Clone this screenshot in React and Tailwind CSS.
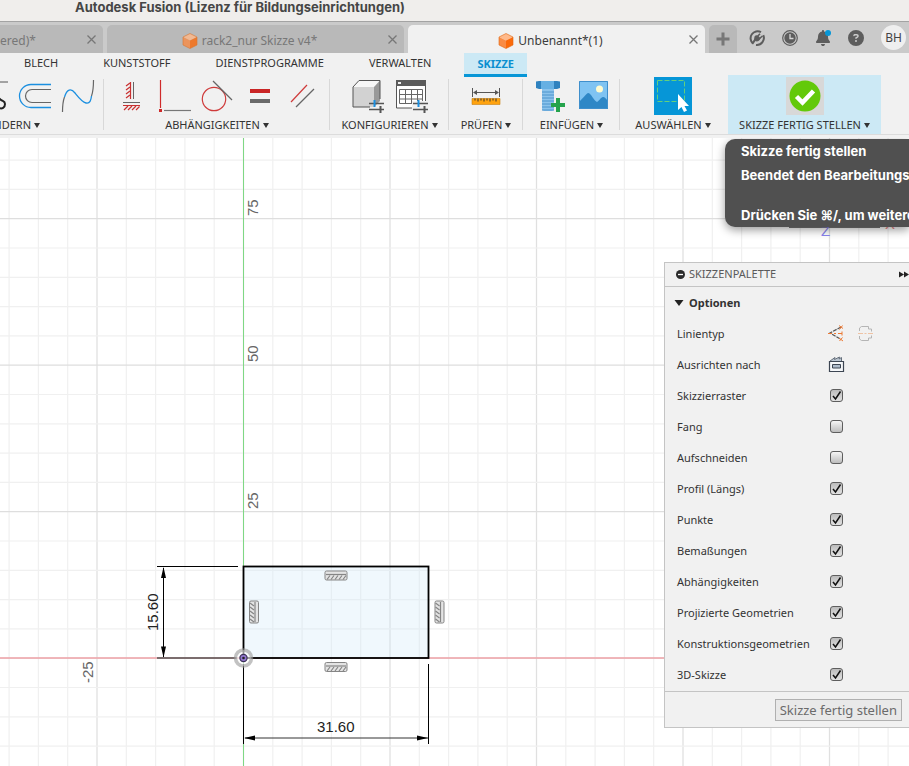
import { FaBell, FaCircleQuestion } from "react-icons/fa6";

const RIBBON_TABS = ["BLECH", "KUNSTSTOFF", "DIENSTPROGRAMME", "VERWALTEN", "SKIZZE"];

const PALETTE_OPTIONS = [
  { label: "Skizzierraster", checked: true },
  { label: "Fang", checked: false },
  { label: "Aufschneiden", checked: false },
  { label: "Profil (Längs)", checked: true },
  { label: "Punkte", checked: true },
  { label: "Bemaßungen", checked: true },
  { label: "Abhängigkeiten", checked: true },
  { label: "Projizierte Geometrien", checked: true },
  { label: "Konstruktionsgeometrien", checked: true },
  { label: "3D-Skizze", checked: true },
];

// sketch origin and grid step in canvas pixels
const ORIGIN = { x: 243.5, y: 520 };
const STEP = 29.3;

function CubeIcon({ muted }) {
  return (
    <svg width="16" height="16" viewBox="0 0 16 16" className={muted ? "opacity-80" : ""}>
      <path d="M8 .5 15 4 8 7.5 1 4z" fill="#ffb98a" />
      <path d="M1 4l7 3.5v8L1 12z" fill="#f98c45" />
      <path d="M15 4 8 7.5v8l7-3.5z" fill="#fb6a0a" />
      <path d="M8 .5 15 4v8l-7 3.5L1 12V4z" fill="none" stroke="#e0650f" strokeWidth=".6" />
    </svg>
  );
}

function CloseButton({ label }) {
  return (
    <button aria-label={label} className="flex h-4 w-4 shrink-0 items-center justify-center">
      <svg width="9" height="9" viewBox="0 0 9 9" stroke="#777" strokeWidth="1.3">
        <path d="M.5.5l8 8M8.5.5l-8 8" />
      </svg>
    </button>
  );
}

function ToolIcon({ label, children }) {
  return (
    <button aria-label={label} className="h-[38px] w-[38px] shrink-0">
      <svg width="38" height="38" viewBox="0 0 38 38" fill="none">
        {children}
      </svg>
    </button>
  );
}

function GroupLabel({ children }) {
  return (
    <button className="flex h-[19px] items-center gap-[3px] whitespace-nowrap pt-[2px] text-[11px]">
      {children}
      <svg width="6" height="5" viewBox="0 0 6 5">
        <path d="M0 0h6L3 5z" fill="#333" />
      </svg>
    </button>
  );
}

function ToolGroup({ label, className, children }) {
  return (
    <div className={`relative flex shrink-0 flex-col items-center pt-[2px] ${className}`}>
      <div className="flex gap-[5px]">{children}</div>
      <GroupLabel>{label}</GroupLabel>
      <span className="absolute right-0 top-1 h-[51px] w-px bg-[#d8d8d8]" />
    </div>
  );
}

function TitleAndTabs() {
  return (
    <header className="shrink-0">
      <div className="h-[22px] overflow-hidden border-b border-[#a3a3a3] bg-[#f0eeec] pl-[75px] font-['Inter','Liberation_Sans',sans-serif] text-[13px] font-bold leading-[14px] text-[#464646]">
        Autodesk Fusion (Lizenz für Bildungseinrichtungen)
      </div>
      <div className="flex h-[31px] items-end gap-1 overflow-hidden bg-[#cacaca] text-[12px] text-[#777]">
        <div className="flex h-7 w-[103px] shrink-0 items-center justify-between rounded-tr-[5px] bg-[#b9b9b9] pr-1">
          <span className="pt-[3px]">ered)*</span>
          <CloseButton label="Tab schließen" />
        </div>
        <div className="flex h-7 w-[297px] shrink-0 items-center rounded-t-[5px] bg-[#b9b9b9] pl-2 pr-1">
          <span className="flex flex-1 items-center justify-center gap-1 pt-[3px]">
            <CubeIcon muted />
            rack2_nur Skizze v4*
          </span>
          <CloseButton label="Tab schließen" />
        </div>
        <div className="flex h-7 w-[297px] shrink-0 items-center rounded-t-[5px] bg-[#f1f1f1] pl-2 pr-1 text-[#3c3c3c]">
          <span className="flex flex-1 items-center justify-center gap-1 pt-[3px]">
            <CubeIcon />
            Unbenannt*(1)
          </span>
          <CloseButton label="Tab schließen" />
        </div>
        <button
          aria-label="Neuer Tab"
          className="flex h-7 w-7 shrink-0 items-center justify-center rounded-t-[5px] bg-[#b9b9b9]"
        >
          <svg width="14" height="14" viewBox="0 0 14 14" stroke="#777" strokeWidth="3">
            <path d="M7 .5v13M.5 7h13" />
          </svg>
        </button>
        <div className="ml-2 flex h-[31px] items-center gap-[17px] text-[#5d5d5d]">
          <button aria-label="Erweiterungen">
            <svg width="16" height="16" viewBox="0 0 16 16" fill="none" stroke="#5d5d5d">
              <path d="M4 13.600A7 7 0 0 1 12 2.200" strokeWidth="2" />
              <path d="M14.300 5.200A7 7 0 0 1 7 14.900" strokeWidth="2" />
              <path d="M5.500 6.500C7 4.500 9 4.500 11.500 8.500 10.500 11 8 12 6.500 11L4 14.500 2.500 13 5 9.500z" fill="#5d5d5d" stroke="none" />
              <path d="M8 7l3-3.200M10 9l3.500-3" strokeWidth="1.600" />
            </svg>
          </button>
          <button aria-label="Auftragsstatus">
            <svg width="16" height="16" viewBox="0 0 16 16" fill="none">
              <circle cx="8" cy="8" r="7.300" stroke="#5d5d5d" strokeWidth="1.200" />
              <circle cx="8" cy="8" r="5.700" fill="#5d5d5d" />
              <path d="M8 4v4.500h3.500" stroke="#d6d6d6" strokeWidth="1.300" />
            </svg>
          </button>
          <button aria-label="Benachrichtigungen" className="relative">
            <FaBell size={16} />
            <span className="absolute right-0 top-0 h-[6px] w-[6px] rounded-full bg-[#0696d7]" />
          </button>
          <button aria-label="Hilfe">
            <FaCircleQuestion size={16} />
          </button>
          <button className="h-[25px] w-[25px] rounded-full bg-[#efefef] text-[12px] text-[#444]">
            BH
          </button>
        </div>
      </div>
    </header>
  );
}

function Ribbon() {
  return (
    <div className="h-[85px] shrink-0 overflow-hidden bg-[#f1f1f1] text-[#333]">
      <nav className="flex h-[22px] items-start gap-[21px] pl-3 text-[11px]">
        {RIBBON_TABS.map((tab) => (
          <button
            key={tab}
            className={
              tab === "SKIZZE"
                ? "h-6 border-b-[3px] border-[#0696d7] bg-[#cce9f5] px-[13px] font-bold leading-5 text-[#0a8fd0]"
                : "h-6 px-3 pb-1 leading-5"
            }
          >
            {tab}
          </button>
        ))}
      </nav>

      <div className="flex h-[60px] border-b border-[#dcdcdc]">
        <div className="relative w-[104px] shrink-0 overflow-hidden pt-[2px]">
          <div className="flex w-[97px] justify-end gap-[5px]">
            <ToolIcon label="Abrunden">
              <path d="M27 5h8" stroke="#555" />
              <path d="M26 21c3 4 6 2 6 6s-3 5-6 4" stroke="#222" strokeWidth="2" />
            </ToolIcon>
            <ToolIcon label="Versatz">
              <path d="M35 7.500H15a11.500 11.500 0 0 0 0 23h20" stroke="#1b8fe0" strokeWidth="1.300" />
              <path d="M35 12.500H16a6.500 6.500 0 0 0 0 13h19" stroke="#666" strokeWidth="1.200" />
            </ToolIcon>
            <ToolIcon label="Spline bearbeiten">
              <path d="M3.500 35c0-6 .5-11 2-15M34.500 3c0 6-.5 12-2 16" stroke="#666" strokeWidth="1.200" />
              <path d="M5.500 20C8 12 12 11 16 16s7 9 11 10 5-3 5.500-7" stroke="#1b8fe0" strokeWidth="1.300" />
            </ToolIcon>
          </div>
          <div className="flex w-10 justify-end overflow-hidden">
            <GroupLabel>ÄNDERN</GroupLabel>
          </div>
          <span className="absolute right-0 top-1 h-[51px] w-px bg-[#d8d8d8]" />
        </div>

        <ToolGroup label="ABHÄNGIGKEITEN" className="w-[226px]">
          <ToolIcon label="Horizontal/Vertikal">
            <path d="M21.500 5v17M11 25.500h17" stroke="#666" />
            <path d="M18.500 5v17M11 28.500h17" stroke="#c93131" strokeWidth="1.200" />
            <path
              d="M18 6l-4 3M18 10l-4 3M18 14l-4 3M18 18l-4 3M16 29l-4 4M20 29l-4 4M24 29l-4 4M27.500 29.500l-3.500 3.500"
              stroke="#c93131"
              strokeWidth="1.200"
            />
          </ToolIcon>
          <ToolIcon label="Lotrecht">
            <path d="M5.500 3v28" stroke="#cf2a2a" strokeWidth="1.200" />
            <path d="M9 33.500h27" stroke="#777" strokeWidth="1.200" />
            <path d="M4 32h3v3H4z" fill="#cf2a2a" />
          </ToolIcon>
          <ToolIcon label="Tangential">
            <circle cx="16" cy="22" r="11.700" stroke="#cf3a3a" strokeWidth="1.200" />
            <path d="M15 4l19 19" stroke="#666" strokeWidth="1.200" />
          </ToolIcon>
          <ToolIcon label="Gleich">
            <path d="M9 12h20v4H9z" fill="#c92525" />
            <path d="M9 22h20v4H9z" fill="#6a6a6a" />
          </ToolIcon>
          <ToolIcon label="Parallel">
            <path d="M7 25 23 8" stroke="#cf3a3a" strokeWidth="1.200" />
            <path d="M12 30 30 12" stroke="#666" strokeWidth="1.200" />
          </ToolIcon>
        </ToolGroup>

        <ToolGroup label="KONFIGURIEREN" className="w-[119px]">
          <ToolIcon label="Modell konfigurieren">
            <path d="M4 10 10 3.500h21L25 10z" fill="#f7f7f7" />
            <path d="M25 10 31 3.500V24l-6 6z" fill="#999" />
            <path d="M4 10h21v20H4z" fill="#d2d2d2" />
            <path d="M4 30V10l6-6.500h21V22M4 30h17" stroke="#555" />
            <path d="M20 26.500h15M20 32.500h15" stroke="#555" strokeWidth="1.400" />
            <path d="M25.500 23v7" stroke="#1b8fe0" strokeWidth="2" />
            <path d="M31.500 29v7" stroke="#555" strokeWidth="2" />
          </ToolIcon>
          <ToolIcon label="Konfigurationstabelle">
            <path d="M4.500 4h29v27h-29z" fill="#fff" stroke="#555" />
            <path d="M4 3h30v6H4z" fill="#5b5b5b" />
            <path d="M6 5h3v2H6z" fill="#eee" />
            <path d="M7.500 12.500h23v14h-23zM7.500 17.500h23M7.500 22h23M13.500 12.500v14M19.500 12.500v14M25.500 12.500v14" stroke="#666" />
            <path d="M20 24h16v12H20z" fill="#f1f1f1" />
            <path d="M21 26.500h15M21 32.500h15" stroke="#555" strokeWidth="1.400" />
            <path d="M26.500 23v7" stroke="#1b8fe0" strokeWidth="2" />
            <path d="M32.500 29v7" stroke="#555" strokeWidth="2" />
          </ToolIcon>
        </ToolGroup>

        <ToolGroup label="PRÜFEN" className="w-[74px]">
          <ToolIcon label="Messen">
            <path d="M5.500 11v9M32.500 11v9M7 15.500h24" stroke="#555" />
            <path d="M6 15.500l4-2.500v5zM32 15.500l-4-2.500v5z" fill="#555" />
            <path d="M5 21.500h28v6H5z" fill="#ffa30f" stroke="#c78012" strokeWidth=".6" />
            <path d="M8 21.500v2M11 21.500v3M14 21.500v2M17 21.500v3M20 21.500v2M23 21.500v3M26 21.500v2M29 21.500v3" stroke="#333" />
          </ToolIcon>
        </ToolGroup>

        <ToolGroup label="EINFÜGEN" className="w-[97px]">
          <ToolIcon label="Befestigungselement einfügen">
            <path d="M5 4.500 8 4h18l3 .5V11l-3 1H8l-3-1z" fill="#2f82bf" />
            <path d="M10 4h13v8H10z" fill="#66b0e3" />
            <path d="M11 12h12v21l-2 1h-8l-2-1z" fill="#8bc3ec" />
            <path d="M11 15h12M11 18h12M11 21h12M11 24h12M11 27h12M11 30h12M11 33h12" stroke="#4d94cc" />
            <path d="M25 21h4v5h5v4h-5v5h-4v-5h-5v-4h5z" fill="#25a34c" />
          </ToolIcon>
          <ToolIcon label="Bild einfügen">
            <path d="M5 4h29v28H5z" fill="#7fc3f2" />
            <path d="M5 25c4-4 7-8 9-9 3 0 6 8 9 9 2-1 4-5 6-5s3 2 5 4v8H5z" fill="#2e87c6" />
            <circle cx="25.500" cy="12" r="3.500" fill="#fffbd0" />
            <path d="M5.500 4.500h28v27h-28z" stroke="#3f8fcc" />
          </ToolIcon>
        </ToolGroup>

        <div className="flex w-[106px] shrink-0 flex-col items-center pt-[2px]">
          <ToolIcon label="Auswählen">
            <path d="M0 0h38v38H0z" fill="#0696d7" />
            <path d="M3.500 3.500h27v21h-27z" stroke="#63d07c" strokeDasharray="5 2" />
            <path d="M24 17v16l3.500-3 2.500 5 3-1.500-2.500-4.500H35z" fill="#fff" />
          </ToolIcon>
          <GroupLabel>AUSWÄHLEN</GroupLabel>
        </div>

        <div className="ml-[2px] flex w-[153px] shrink-0 flex-col items-center bg-[#cce9f5] pt-[2px]">
          <ToolIcon label="Skizze fertig stellen">
            <path d="M0 0h38v38H0z" fill="#d8d8d8" />
            <circle cx="19" cy="19" r="15.500" fill="#63c90a" />
            <path d="M10.500 19.500l6 6L27.500 14" stroke="#fff" strokeWidth="4.500" />
          </ToolIcon>
          <GroupLabel>SKIZZE FERTIG STELLEN</GroupLabel>
        </div>
      </div>
    </div>
  );
}

// small hatched badge of a horizontal or vertical constraint
function ConstraintBadge({ x, y, vertical }) {
  return (
    <g transform={`translate(${x} ${y})${vertical ? " rotate(90)" : ""}`} stroke="#858585" fill="none">
      <rect x="-11" y="-4.500" width="22" height="9" rx="1.500" fill="#e4e4e4" />
      <path d="M-10-1h20" strokeWidth="1.200" />
      <path d="M-9 4l3-4M-5 4l3-4M-1 4l3-4M3 4l3-4M7 4l3-4" strokeWidth="1.200" />
    </g>
  );
}

function SketchCanvas() {
  const columns = Array.from({ length: 90 }, (_, i) => i - 8);
  const rows = Array.from({ length: 60 }, (_, i) => i - 17);

  return (
    <svg
      className="absolute inset-0 h-full w-full font-['Liberation_Sans',sans-serif] text-[15px]"
      role="img"
      aria-label="Skizze"
    >
      {columns.map((i) => (
        <path
          key={`c${i}`}
          d={`M${ORIGIN.x + i * STEP} 0v2000`}
          stroke={i % 5 === 0 ? "#e0e0e0" : "#f0f0f0"}
          strokeWidth={i % 5 === 0 ? 1.3 : 1.2}
        />
      ))}
      {rows.map((i) => (
        <path
          key={`r${i}`}
          d={`M0 ${ORIGIN.y + 0.2 + i * STEP}h3000`}
          stroke={i % 5 === 0 ? "#dedede" : "#f0f0f0"}
          strokeWidth="1.200"
        />
      ))}

      <path d="M0 520h3000" stroke="#f0a3a8" strokeWidth="1.500" />
      <path d="M243.500 0v2000" stroke="#7fd884" />

      <g fill="#666">
        <text transform="translate(258 78) rotate(-90)">75</text>
        <text transform="translate(258 224) rotate(-90)">50</text>
        <text transform="translate(258 371) rotate(-90)">25</text>
        <text transform="translate(93 545) rotate(-90)">-25</text>
      </g>

      <rect x="243.500" y="428.500" width="185" height="91.500" fill="#cfe9fa" fillOpacity=".32" stroke="#000" strokeWidth="1.800" />

      <g stroke="#000" fill="none">
        <path d="M157 428.500h81M163.500 430v89M243.500 526v80M428.500 526v80" />
        <path d="M157 520h80" stroke="#555" strokeWidth="1.500" />
        <path d="M245 600h183" stroke="#333" />
      </g>
      <path
        d="M163.500 429l2.500 11h-5zM163.500 519.500l2.500-11h-5zM244 600l11-2.500v5zM428 600l-11-2.500v5z"
        fill="#000"
      />
      <text transform="translate(158 493) rotate(-90)" fill="#222">
        15.60
      </text>
      <text x="317" y="594" fill="#222">
        31.60
      </text>

      <ConstraintBadge x={336} y={437.5} />
      <ConstraintBadge x={336} y={529} />
      <ConstraintBadge x={254} y={474} vertical />
      <ConstraintBadge x={439.5} y={474} vertical />

      <circle cx="243.500" cy="520" r="8" stroke="#999" strokeOpacity=".6" strokeWidth="3.500" fill="#fff" fillOpacity=".6" />
      <circle cx="243.500" cy="520" r="3.600" fill="#9277cf" stroke="#3b3157" strokeWidth="1.200" />
      <circle cx="243.500" cy="520" r="1.300" fill="#222" />
    </svg>
  );
}

function Tooltip() {
  return (
    <div
      role="tooltip"
      className="absolute right-0 top-px flex h-[88px] w-[184px] flex-col overflow-hidden whitespace-nowrap rounded-l-[10px] bg-[#505050] pl-4 font-['Inter','Liberation_Sans',sans-serif] text-[13px] font-bold leading-6 text-white shadow-[0_3px_10px_rgba(0,0,0,0.4)]"
    >
      <p>Skizze fertig stellen</p>
      <p>Beendet den Bearbeitungs</p>
      <p className="mt-4">Drücken Sie ⌘/, um weitere</p>
    </div>
  );
}

function PaletteCheckbox({ id, defaultChecked }) {
  return (
    <span className="relative h-[13px] w-[13px]">
      <input
        id={id}
        type="checkbox"
        defaultChecked={defaultChecked}
        className="peer block h-[13px] w-[13px] appearance-none rounded-[3px] border border-[#5e5e5e] bg-linear-to-b from-[#f6f6f6] to-[#bdbdbd] checked:from-[#bcbcbc] checked:to-[#e2e2e2]"
      />
      <svg
        className="pointer-events-none absolute inset-0 hidden peer-checked:block"
        width="13"
        height="13"
        viewBox="0 0 13 13"
        fill="none"
        stroke="#111"
        strokeWidth="1.500"
      >
        <path d="M3 7l2.500 3L10.500 2.500" />
      </svg>
    </span>
  );
}

function SketchPalette() {
  return (
    <section className="absolute right-0 top-[124px] w-[245px] border-y border-l border-[#c4c4c4] bg-[#f1f1f1] text-[11px] text-[#333]">
      <div className="flex h-6 items-center gap-1 overflow-hidden border-b border-[#c4c4c4] pl-[11px] text-[#5a5a5a]">
        <svg width="9" height="9" viewBox="0 0 9 9">
          <circle cx="4.500" cy="4.500" r="4.500" fill="#2b2b2b" />
          <path d="M2 4.500h5" stroke="#fff" strokeWidth="1.300" />
        </svg>
        <h2 className="flex-1">SKIZZENPALETTE</h2>
        <button aria-label="Palette einklappen">
          <svg width="10" height="7" viewBox="0 0 10 7">
            <path d="M0 .5l5 3-5 3zM5 .5l5 3-5 3z" fill="#222" />
          </svg>
        </button>
      </div>

      <button className="flex h-8 items-center gap-[5px] pl-[9px] font-bold">
        <svg width="10" height="6" viewBox="0 0 10 6">
          <path d="M.5 0h9L5 6z" fill="#222" />
        </svg>
        Optionen
      </button>

      <div className="grid grid-cols-[151px_1fr] pl-3">
        <span className="flex h-[31px] items-center">Linientyp</span>
        <span className="flex items-center gap-3 pb-[2px]">
          <button aria-label="Konstruktion">
            <svg width="17" height="17" viewBox="0 0 17 17" fill="none">
              <path d="M13 2 2 8l11 6.500" stroke="#555" strokeWidth="1.200" strokeDasharray="4 1" />
              <path d="M0 8.500h4M6 8.500h2M10 8.500h4M14 6.500v4M11 .5l4 3M14.500.5l-3 4M11 13l4 3M14.500 12.500l-3 3.500" stroke="#ec7a35" />
            </svg>
          </button>
          <button aria-label="Mittellinie">
            <svg width="17" height="17" viewBox="0 0 17 17" fill="none">
              <path d="M2.500 6V3l2-1.500h7V4h3v2.500M2.500 11v3l2 1.500h7V13h3v-2.500" stroke="#b5b5b5" />
              <path d="M1 8.500h5M7.500 8.500h2M11 8.500h5" stroke="#efc3a4" />
            </svg>
          </button>
        </span>
        <span className="flex h-[31px] items-center">Ausrichten nach</span>
        <span className="flex items-center pb-[2px]">
          <button aria-label="Ausrichten nach">
            <svg width="17" height="17" viewBox="0 0 17 17" fill="none" stroke="#3d4653">
              <path d="M1.500 5.500h14v10h-14z" fill="#f6f8fa" strokeWidth="1.200" />
              <path d="M4.500 8.500h8v3.500h-8z" fill="#aebccb" />
              <path d="M2 5l5-3.500-.5 2L11.500 1 11 3l2.500-1.500V5" fill="#b9c4cf" stroke="#66707c" />
            </svg>
          </button>
        </span>
        {PALETTE_OPTIONS.map((option) => (
          <div key={option.label} className="col-span-2 grid h-[31px] grid-cols-subgrid items-center">
            <label htmlFor={option.label}>{option.label}</label>
            <span className="flex pb-[3px] pl-[2px]">
              <PaletteCheckbox id={option.label} defaultChecked={option.checked} />
            </span>
          </div>
        ))}
      </div>

      <div className="flex h-9 items-center justify-end border-t border-[#c4c4c4] pr-[7px]">
        <button className="h-[22px] border border-[#b0b0b0] bg-[#e9e9e9] px-1 text-[13px] leading-5 text-[#6b6b6b]">
          Skizze fertig stellen
        </button>
      </div>
    </section>
  );
}

export default function App() {
  return (
    <div className="flex min-h-screen flex-col overflow-hidden bg-white font-['Noto_Sans',sans-serif]">
      <TitleAndTabs />
      <Ribbon />
      <main className="relative min-h-[628px] flex-1 overflow-hidden">
        <SketchCanvas />
        <svg className="absolute right-0 top-[76px] h-6 w-[120px] font-['Liberation_Sans',sans-serif] text-[15px]">
          <path d="M0 13.500h91" stroke="#777" />
          <text x="32" y="22" fill="#8a84f0">Z</text>
          <text x="96" y="15" fill="#e88">X</text>
        </svg>
        <SketchPalette />
        <Tooltip />
      </main>
    </div>
  );
}
